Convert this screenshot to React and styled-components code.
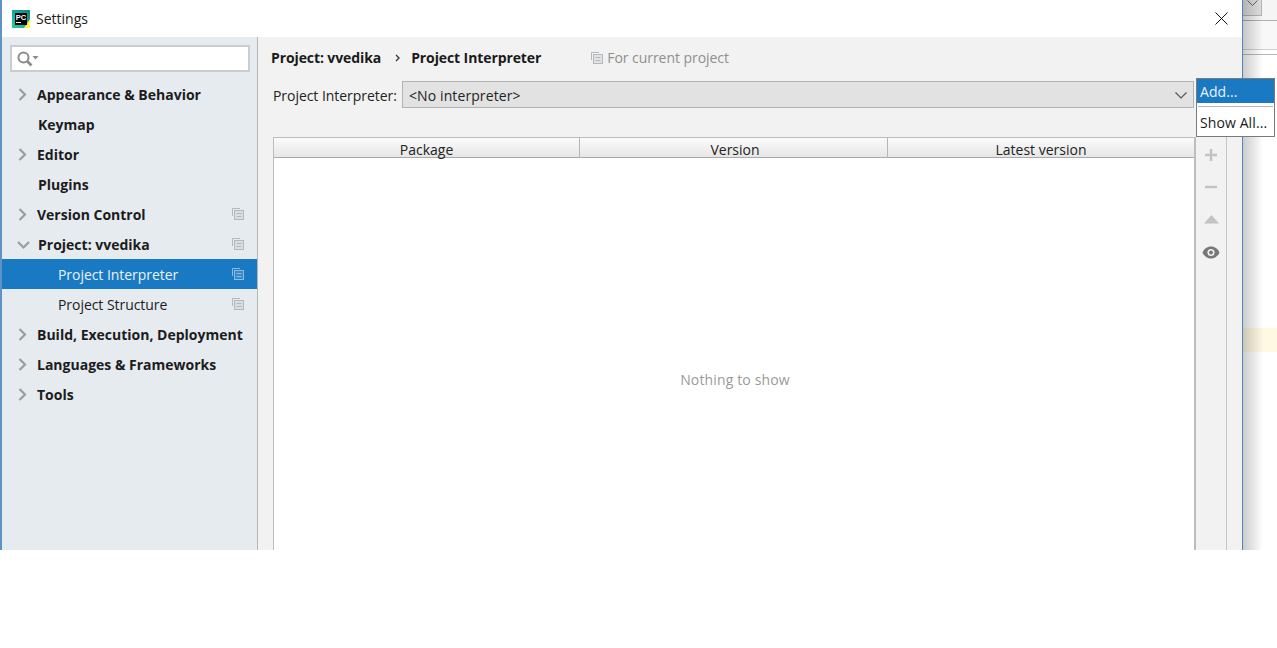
import React from "react";
import styled, { createGlobalStyle } from "styled-components";

const Global = createGlobalStyle`
  html, body { margin: 0; padding: 0; background: #fff; }
  body { font-family: "Open Sans", "Noto Sans", sans-serif; color: #1a1a1a; }
`;

const Screen = styled.div`
  position: relative;
  display: flex;
  width: 1277px;
  height: 550px;
  overflow: hidden;
  background: #fff;
`;

const Window = styled.div`
  display: flex;
  flex-direction: column;
  width: 1243px;
  flex: none;
  box-sizing: border-box;
  border-left: 2px solid #5f93c4;
  border-right: 1px solid #4f86bd;
`;

const TitleBar = styled.div`
  display: flex;
  align-items: center;
  height: 37px;
  flex: none;
  padding: 0 14px 0 10px;
  gap: 6px;
  background: #fff;
  font-size: 14px;
`;

const TitleText = styled.span`
  flex: 1;
  color: #222;
`;

const Body = styled.div`
  display: flex;
  flex: 1;
  min-height: 0;
`;

const Sidebar = styled.nav`
  display: flex;
  flex-direction: column;
  width: 256px;
  flex: none;
  box-sizing: border-box;
  background: #e6ebf0;
  border-right: 1px solid #b5b5b5;
`;

const SearchBox = styled.div`
  display: flex;
  align-items: center;
  height: 27px;
  box-sizing: border-box;
  margin: 8px 7px 7px 8px;
  padding-left: 5px;
  background: #fff;
  border: 2px solid #c9cdd0;
`;

const Tree = styled.div`
  display: flex;
  flex-direction: column;
`;

const Row = styled.div`
  display: flex;
  align-items: center;
  height: 30px;
  padding-left: ${(p) => p.$indent}px;
  padding-right: 13px;
  font-size: 14px;
  font-weight: ${(p) => (p.$bold ? 700 : 400)};
  letter-spacing: ${(p) => (p.$bold ? "0" : "-0.05px")};
  color: ${(p) => (p.$selected ? "#e8f2fb" : "#1c1c1c")};
  background: ${(p) => (p.$selected ? "#1a79c3" : "transparent")};
`;

const Arrow = styled.span`
  display: flex;
  width: 30px;
  margin-left: ${(p) => (p.$open ? -14 : -15)}px;
  justify-content: center;
  flex: none;
`;

const RowLabel = styled.span`
  flex: 1;
  white-space: nowrap;
`;

const Main = styled.main`
  display: flex;
  flex-direction: column;
  flex: 1;
  min-width: 0;
  background: #f2f2f2;
  padding: 0 0 0 14px;
`;

const Breadcrumb = styled.div`
  display: flex;
  align-items: center;
  height: 41px;
  margin-left: -1px;
  font-size: 14px;
  font-weight: 700;
  letter-spacing: -0.1px;
  color: #1a1a1a;
`;

const Crumb = styled.span`
  white-space: nowrap;
`;

const CrumbSep = styled.span`
  display: flex;
  margin: 0 11px 0 14px;
`;

const Scope = styled.span`
  display: flex;
  align-items: center;
  gap: 4px;
  margin-left: 50px;
  font-weight: 400;
  letter-spacing: -0.05px;
  color: #8f8f8f;
`;

const InterpreterRow = styled.div`
  display: flex;
  align-items: center;
  height: 27px;
  margin-top: 3px;
  padding-left: 1px;
  font-size: 14px;
  letter-spacing: -0.05px;
`;

const Label = styled.label`
  width: 129px;
  flex: none;
  padding-top: 1px;
  color: #222;
  white-space: nowrap;
`;

const Select = styled.div`
  display: flex;
  align-items: center;
  justify-content: space-between;
  width: 792px;
  height: 27px;
  box-sizing: border-box;
  padding: 1px 6px 0 6px;
  background: #e2e2e2;
  border: 1px solid #b3b3b3;
  letter-spacing: 0.1px;
  color: #222;
`;

const TableArea = styled.div`
  display: flex;
  flex: 1;
  min-height: 0;
  margin-top: 29px;
`;

const Table = styled.div`
  display: flex;
  flex-direction: column;
  width: 923px;
  flex: none;
  box-sizing: border-box;
  margin-left: 1px;
  background: #fff;
  border-left: 1px solid #bdbdbd;
  border-right: 2px solid #bdbdbd;
  border-top: 1px solid #bdbdbd;
`;

const TableHead = styled.div`
  display: grid;
  grid-template-columns: 306px 308px 1fr;
  height: 20px;
  flex: none;
  box-sizing: border-box;
  background: linear-gradient(#fbfbfb, #e6e6e6);
  border-bottom: 1px solid #a9a9a9;
`;

const HeadCell = styled.div`
  display: flex;
  align-items: center;
  justify-content: center;
  font-size: 14px;
  letter-spacing: 0;
  padding-top: 4px;
  padding-left: ${(p) => p.$shift || 0}px;
  line-height: 16px;
  color: #222;
  border-right: ${(p) => (p.$last ? "none" : "1px solid #b5b5b5")};
  margin-bottom: 1px;
`;

const Empty = styled.div`
  display: flex;
  flex: 1;
  align-items: flex-start;
  justify-content: center;
  padding-top: 212px;
  padding-left: 2px;
  font-size: 14px;
  letter-spacing: 0.15px;
  color: #9a9a9a;
`;

const ToolColumn = styled.div`
  display: flex;
  flex-direction: column;
  align-items: center;
  width: 31px;
  flex: none;
  box-sizing: border-box;
  border-right: 1px solid #c4c4c4;
  padding-top: 2px;
`;

const ToolButton = styled.div`
  display: flex;
  align-items: center;
  justify-content: center;
  width: 30px;
  height: 32.33px;
  flex: none;
`;

const Backdrop = styled.div`
  position: relative;
  flex: 1;
  display: flex;
  flex-direction: column;
  min-width: 0;
  background: #fff;
`;

const BackdropTop = styled.div`
  height: 20px;
  flex: none;
  background: #f5f5f5;
`;

const BackdropMiddle = styled.div`
  height: 28px;
  flex: none;
  background: #f8f8f8;
`;

const BackdropButton = styled.div`
  display: flex;
  align-items: flex-start;
  justify-content: center;
  width: 19px;
  height: 16px;
  box-sizing: border-box;
  background: #e0e0e0;
  border: solid #b5b5b5;
  border-width: 0 1px 1px 0;
`;

const BackdropLine = styled.div`
  height: 1px;
  flex: none;
  background: ${(p) => p.$color};
  margin-top: ${(p) => p.$top}px;
`;

const Highlight = styled.div`
  height: 24px;
  flex: none;
  margin-top: ${(p) => p.$top}px;
  background: #fff8e2;
`;

const Shadow = styled.div`
  position: absolute;
  inset: 0 auto 0 0;
  width: 20px;
  background: linear-gradient(90deg, rgba(0,0,0,0.2), rgba(0,0,0,0));
`;

const Menu = styled.div`
  position: absolute;
  top: 78px;
  left: 1196px;
  width: 79px;
  height: 59px;
  box-sizing: border-box;
  background: #fff;
  border: 1px solid #7a7a7a;
  font-size: 14px;
  letter-spacing: 0.1px;
`;

const MenuItem = styled.div`
  display: flex;
  align-items: center;
  height: ${(p) => (p.$active ? 24 : 28)}px;
  box-sizing: border-box;
  padding-left: 3px;
  padding-top: ${(p) => (p.$active ? 0 : 2)}px;
  color: ${(p) => (p.$active ? "#eaf3fb" : "#1a1a1a")};
  background: ${(p) => (p.$active ? "#1a79c3" : "transparent")};
`;

const MenuDivider = styled.div`
  height: 1px;
  margin: 3px 1px 0;
  background: #b5b5b5;
`;

const CopyIcon = ({ color = "#b4b8bb" }) => (
  <svg width="12" height="12" viewBox="0 0 12 12" fill="none" stroke={color}>
    <path d="M.5 8V.5H8" />
    <rect x="2.5" y="2.5" width="9" height="9" fill={color} fillOpacity=".25" />
    <path d="M4.5 5.5h5M4.5 8.5h5" />
  </svg>
);

const Chevron = ({ open }) => (
  <svg width="13" height="13" viewBox="0 0 13 13" fill="none" stroke="#9a9da0" strokeWidth="2.2">
    {open ? <path d="M1 4l5.5 5.5L12 4" /> : <path d="M3.500 1l5.500 5.500L3.500 12" />}
  </svg>
);

const PcLogo = () => (
  <svg width="18" height="18" viewBox="0 0 18 18">
    <defs>
      <linearGradient id="pc" x1="0" y1="1" x2="1" y2="0">
        <stop offset="0" stopColor="#21d789" />
        <stop offset="0.6" stopColor="#12a0a8" />
        <stop offset="1" stopColor="#0e8a6a" />
      </linearGradient>
    </defs>
    <rect width="18" height="18" fill="url(#pc)" />
    <path d="M12 18L18 9v9z" fill="#fcf84a" />
    <rect x="3" y="3" width="12" height="12" fill="#000" />
    <text x="3.800" y="10" fontSize="7.500" fontWeight="700" fill="#fff" fontFamily="Liberation Sans, sans-serif">PC</text>
    <rect x="4" y="12" width="5" height="1" fill="#fff" />
  </svg>
);

const rows = [
  { label: "Appearance & Behavior", bold: true, arrow: "closed" },
  { label: "Keymap", bold: true, plain: true },
  { label: "Editor", bold: true, arrow: "closed" },
  { label: "Plugins", bold: true, plain: true },
  { label: "Version Control", bold: true, arrow: "closed", copy: true },
  { label: "Project: vvedika", bold: true, arrow: "open", copy: true },
  { label: "Project Interpreter", child: true, selected: true, copy: true },
  { label: "Project Structure", child: true, copy: true },
  { label: "Build, Execution, Deployment", bold: true, arrow: "closed" },
  { label: "Languages & Frameworks", bold: true, arrow: "closed" },
  { label: "Tools", bold: true, arrow: "closed" },
];

export default function App() {
  return (
    <>
      <Global />
      <Screen>
        <Window>
          <TitleBar>
            <PcLogo />
            <TitleText>Settings</TitleText>
            <svg width="13" height="13" viewBox="0 0 13 13" stroke="#111" fill="none">
              <path d="M.5.5l12 12M12.5.5l-12 12" />
            </svg>
          </TitleBar>
          <Body>
            <Sidebar>
              <SearchBox>
                <svg width="22" height="16" viewBox="0 0 22 16" fill="none">
                  <circle cx="6.500" cy="6.500" r="5" stroke="#8b8b8b" strokeWidth="2" />
                  <path d="M10.500 10.500l4 4" stroke="#8b8b8b" strokeWidth="2.6" />
                  <path d="M15.500 5h6l-3 3.500z" fill="#8b8b8b" />
                </svg>
              </SearchBox>
              <Tree>
                {rows.map((r) => (
                  <Row
                    key={r.label}
                    $bold={r.bold}
                    $selected={r.selected}
                    $indent={r.child ? 56 : r.plain ? 36 : 20}
                  >
                    {r.arrow && (
                      <Arrow $open={r.arrow === "open"}>
                        <Chevron open={r.arrow === "open"} />
                      </Arrow>
                    )}
                    <RowLabel>{r.label}</RowLabel>
                    {r.copy && <CopyIcon color={r.selected ? "#8fbbe0" : "#b4b8bb"} />}
                  </Row>
                ))}
              </Tree>
            </Sidebar>
            <Main>
              <Breadcrumb>
                <Crumb>Project: vvedika</Crumb>
                <CrumbSep>
                  <svg width="5" height="8" viewBox="0 0 5 8" fill="none" stroke="#333" strokeWidth="1.3">
                    <path d="M1 1l3 3-3 3" />
                  </svg>
                </CrumbSep>
                <Crumb>Project Interpreter</Crumb>
                <Scope>
                  <CopyIcon />
                  For current project
                </Scope>
              </Breadcrumb>
              <InterpreterRow>
                <Label>Project Interpreter:</Label>
                <Select>
                  &lt;No interpreter&gt;
                  <svg width="12" height="7" viewBox="0 0 12 7" fill="none" stroke="#555" strokeWidth="1.2">
                    <path d="M.5.5L6 6 11.5.5" />
                  </svg>
                </Select>
              </InterpreterRow>
              <TableArea>
                <Table>
                  <TableHead>
                    <HeadCell>Package</HeadCell>
                    <HeadCell $shift={3}>Version</HeadCell>
                    <HeadCell $last>Latest version</HeadCell>
                  </TableHead>
                  <Empty>Nothing to show</Empty>
                </Table>
                <ToolColumn>
                  <ToolButton>
                    <svg width="14" height="14" viewBox="0 0 14 14" stroke="#c2c2c2" strokeWidth="2.4">
                      <path d="M7 1v12M1 7h12" />
                    </svg>
                  </ToolButton>
                  <ToolButton>
                    <svg width="14" height="14" viewBox="0 0 14 14" stroke="#c2c2c2" strokeWidth="2.4">
                      <path d="M1 7h12" />
                    </svg>
                  </ToolButton>
                  <ToolButton>
                    <svg width="15" height="9" viewBox="0 0 15 9" fill="#c2c2c2">
                      <path d="M7.500 0L15 8.500H0z" />
                    </svg>
                  </ToolButton>
                  <ToolButton>
                    <svg width="18" height="13" viewBox="0 0 18 13">
                      <path d="M9 0.500C5 .5 2 3 .5 6.500 2 10 5 12.500 9 12.500S16 10 17.500 6.500C16 3 13 .5 9 .5z" fill="#777" />
                      <circle cx="9" cy="6.500" r="3.600" fill="#f2f2f2" />
                      <circle cx="9" cy="6.500" r="2" fill="#777" />
                    </svg>
                  </ToolButton>
                </ToolColumn>
              </TableArea>
            </Main>
          </Body>
        </Window>
        <Backdrop>
          <BackdropTop>
            <BackdropButton>
              <svg width="11" height="6" viewBox="0 0 11 6" fill="none" stroke="#666">
                <path d="M.5.5l5 5 5-5" />
              </svg>
            </BackdropButton>
          </BackdropTop>
          <BackdropLine $top={0} $color="#b0b0b0" />
          <BackdropMiddle />
          <BackdropLine $top={0} $color="#d0d0d0" />
          <BackdropLine $top={4} $color="#b8b8b8" />
          <Highlight $top={273} />
          <Shadow />
        </Backdrop>
        <Menu>
          <MenuItem $active>Add...</MenuItem>
          <MenuDivider />
          <MenuItem>Show All...</MenuItem>
        </Menu>
      </Screen>
    </>
  );
}
